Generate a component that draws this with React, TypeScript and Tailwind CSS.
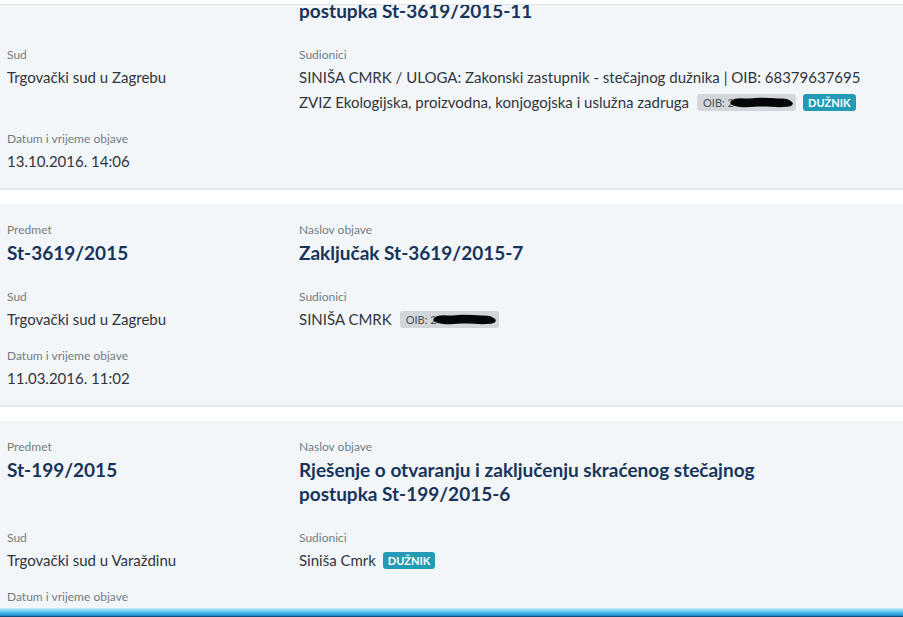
import React from 'react';

type Participant = {
  name: string;
  oib?: boolean;
  duznik?: boolean;
};

type Notice = {
  predmet: string;
  naslov: string[];
  sud: string;
  sudionici: Participant[];
  datum: string;
};

const notices: Notice[] = [
  {
    predmet: 'St-3619/2015',
    naslov: ['Rješenje o otvaranju i zaključenju skraćenog stečajnog', 'postupka St-3619/2015-11'],
    sud: 'Trgovački sud u Zagrebu',
    sudionici: [
      { name: 'SINIŠA CMRK / ULOGA: Zakonski zastupnik - stečajnog dužnika | OIB: 68379637695' },
      { name: 'ZVIZ Ekologijska, proizvodna, konjogojska i uslužna zadruga', oib: true, duznik: true },
    ],
    datum: '13.10.2016. 14:06',
  },
  {
    predmet: 'St-3619/2015',
    naslov: ['Zaključak St-3619/2015-7'],
    sud: 'Trgovački sud u Zagrebu',
    sudionici: [{ name: 'SINIŠA CMRK', oib: true }],
    datum: '11.03.2016. 11:02',
  },
  {
    predmet: 'St-199/2015',
    naslov: ['Rješenje o otvaranju i zaključenju skraćenog stečajnog', 'postupka St-199/2015-6'],
    sud: 'Trgovački sud u Varaždinu',
    sudionici: [{ name: 'Siniša Cmrk', duznik: true }],
    datum: '',
  },
];

// black marker scribble over the OIB number
const Redacted = () => (
  <svg width="64" height="13" viewBox="0 0 66 13" className="shrink-0">
    <path
      d="M1 5 C5 1 12 2 20 2.5 C30 1 40 2 50 2.5 C56 2 61 3 64 6 C66 8 64 11 58 11 C48 12 36 10 25 11 C15 12 7 11 2 9 C0 8 0 6 1 5 Z"
      fill="#050505"
    />
  </svg>
);

const Label = ({ children }: { children: React.ReactNode }) => (
  <div className="text-[12px] leading-[18px] mb-[2px] text-[#737b83]">{children}</div>
);

const Card = ({ n }: { n: Notice }) => (
  <div className="bg-[#f3f6f9] border-b-2 border-[#e6e9ec] pt-[17px] pb-[16px] pl-[7px] pr-4">
    <div className="grid grid-cols-[292px_1fr]">
      <div className="mb-[23px]">
        <Label>Predmet</Label>
        <div className="text-[19px] leading-[24px] font-bold text-[#17345a]">{n.predmet}</div>
      </div>
      <div className="mb-[23px]">
        <Label>Naslov objave</Label>
        <div className="text-[19px] leading-[24px] font-bold text-[#17345a]">
          {n.naslov.map((l, i) => (
            <div key={i}>{l}</div>
          ))}
        </div>
      </div>

      <div className="mb-[17px]">
        <Label>Sud</Label>
        <div className="text-[15px] leading-[22px] text-[#2f353b]">{n.sud}</div>
      </div>
      <div className="mb-[17px]">
        <Label>Sudionici</Label>
        <div className="flex flex-col gap-[3px]">
          {n.sudionici.map((p, i) => (
            <div key={i} className="flex items-center text-[15px] leading-[22px] text-[#2f353b]">
              <span className="whitespace-nowrap">{p.name}</span>
              {p.oib && (
                <span className="ml-[8px] h-[17px] w-[99px] shrink-0 inline-flex items-center rounded-[3px] bg-[#d2d6da] pl-[6px] overflow-hidden">
                  <span className="text-[11px] leading-[17px] text-[#4b5157] whitespace-nowrap">OIB: 2</span>
                  <span className="-ml-[4px]">
                    <Redacted />
                  </span>
                </span>
              )}
              {p.duznik && (
                <span className="ml-[7px] h-[17px] shrink-0 inline-flex items-center rounded-[3px] bg-[#249bb4] px-[5px]">
                  <span className="text-[11px] leading-[17px] font-bold text-white">DUŽNIK</span>
                </span>
              )}
            </div>
          ))}
        </div>
      </div>

      <div className="col-span-2">
        <Label>Datum i vrijeme objave</Label>
        <div className="text-[15px] leading-[22px] text-[#2f353b] min-h-[22px]">{n.datum}</div>
      </div>
    </div>
  </div>
);

export default function App() {
  return (
    <div
      className="h-[617px] w-[903px] flex flex-col bg-white overflow-hidden"
      style={{ fontFamily: 'Lato, "Noto Sans", sans-serif' }}
    >
      <div className="h-[5px] shrink-0 bg-white border-b border-[#dfe3e6] relative z-10" />
      <div className="flex-1 overflow-hidden">
        <div className="-mt-[67px] flex flex-col gap-[14px]">
          {notices.map((n, i) => (
            <Card key={i} n={n} />
          ))}
        </div>
      </div>
      {/* taskbar edge */}
      <div className="h-[9px] shrink-0 bg-gradient-to-b from-[#c4f0fa] via-[#52c3ea] to-[#1b7fc9] border-b border-[#0f4f82]" />
    </div>
  );
}
